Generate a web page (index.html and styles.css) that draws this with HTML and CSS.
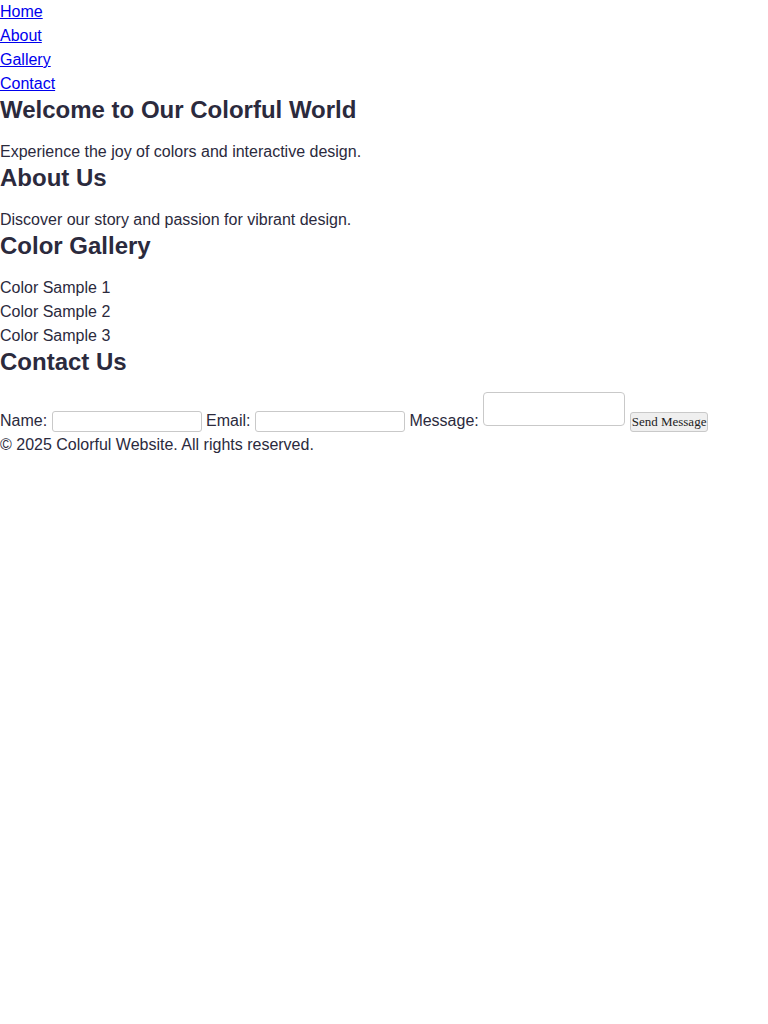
FILE: index.html
```html
<!DOCTYPE html>
<html lang="en">
<head>
<meta charset="utf-8">
<title>Colorful Website</title>
<link rel="stylesheet" href="styles.css">
</head>
<body>
<header class="site-header">
  <nav class="nav">
    <ul class="nav-list">
      <li><a href="#home">Home</a></li>
      <li><a href="#about">About</a></li>
      <li><a href="#gallery">Gallery</a></li>
      <li><a href="#contact">Contact</a></li>
    </ul>
  </nav>
</header>
<main>
  <section id="home" class="section">
    <h2 class="section-title">Welcome to Our Colorful World</h2>
    <p class="section-text">Experience the joy of colors and interactive design.</p>
  </section>
  <section id="about" class="section">
    <h2 class="section-title">About Us</h2>
    <p class="section-text">Discover our story and passion for vibrant design.</p>
  </section>
  <section id="gallery" class="section">
    <h2 class="section-title">Color Gallery</h2>
    <div class="gallery">
      <div class="sample">Color Sample 1</div>
      <div class="sample">Color Sample 2</div>
      <div class="sample">Color Sample 3</div>
    </div>
  </section>
  <section id="contact" class="section">
    <h2 class="section-title">Contact Us</h2>
    <form class="contact-form">
      <label for="name">Name:</label>
      <input class="field" type="text" id="name">
      <label for="email">Email:</label>
      <input class="field" type="email" id="email">
      <label for="message">Message:</label>
      <textarea class="field-area" id="message"></textarea>
      <button class="send-btn" type="submit">Send Message</button>
    </form>
  </section>
</main>
<footer class="site-footer">
  <p class="footer-text">&copy; 2025 Colorful Website. All rights reserved.</p>
</footer>
</body>
</html>
```
FILE: styles.css
```css
* {
  box-sizing: border-box;
}

body {
  margin: 0;
  font-family: "Liberation Sans", Arial, sans-serif;
  font-size: 16px;
  line-height: 1.5;
  color: #2b2a3d;
  background: #ffffff;
}

.nav-list {
  list-style: none;
  margin: 0;
  padding: 0;
}

.nav-list a {
  color: #0000ee;
}

.section-title {
  margin: 0 0 16px;
  font-size: 24px;
  line-height: normal;
  font-weight: bold;
}

.section-text {
  margin: 0;
}

.contact-form {
  margin: 0;
  white-space: nowrap;
}

.field {
  width: 150px;
  height: 21px;
  margin: 0;
  padding: 1px 2px;
  border: 1px solid #c9c9c9;
  border-radius: 3px;
  font-family: "Liberation Sans", Arial, sans-serif;
  font-size: 13px;
  background: #ffffff;
}

.field-area {
  width: 142px;
  height: 34px;
  margin: 0;
  padding: 2px;
  border: 1px solid #c9c9c9;
  border-radius: 4px;
  font-family: "Liberation Mono", monospace;
  font-size: 13px;
  resize: none;
  vertical-align: baseline;
  background: #ffffff;
}

.send-btn {
  height: 20px;
  margin: 0;
  padding: 0 1px;
  border: 1px solid #c9c9c9;
  border-radius: 3px;
  background: #efefef;
  color: #222222;
  font-family: "Liberation Serif", "Times New Roman", serif;
  font-size: 13px;
  line-height: 16px;
}

.footer-text {
  margin: 0;
}
```
